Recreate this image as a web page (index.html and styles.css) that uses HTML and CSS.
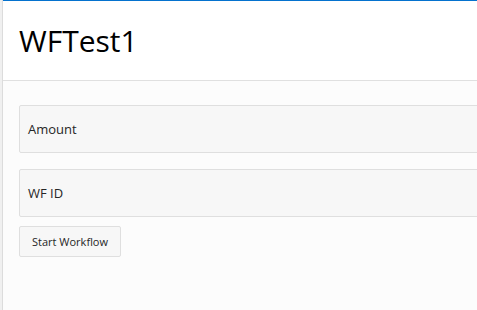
FILE: index.html
```html
<!DOCTYPE html>
<html lang="en">
<head>
<meta charset="utf-8">
<title>WFTest1</title>
<link rel="stylesheet" href="styles.css">
</head>
<body>
<div class="page">
  <div class="rail"></div>
  <div class="main">
    <header class="header">
      <h1 class="title">WFTest1</h1>
    </header>
    <section class="content">
      <div class="field"><span class="label">Amount</span></div>
      <div class="field"><span class="label">WF ID</span></div>
      <button class="btn" type="button">Start Workflow</button>
    </section>
  </div>
</div>
</body>
</html>
```
FILE: styles.css
```css
html, body {
  margin: 0;
  padding: 0;
  height: 100%;
  overflow: hidden;
}
body {
  font-family: "Open Sans", "Noto Sans", sans-serif;
  color: #262626;
  background: #fcfcfc;
}
.page {
  display: flex;
  min-height: 100vh;
}
.rail {
  width: 2px;
  flex: none;
  background: #f0f0f0;
  border-right: 1px solid #dcdcdc;
}
.main {
  flex: 1;
  display: flex;
  flex-direction: column;
  min-width: 0;
  overflow: hidden;
}
.header {
  background: #ffffff;
  border-top: 1px solid #0572ce;
  border-bottom: 1px solid #e0e0e0;
  height: 79px;
  display: flex;
  align-items: center;
  padding-left: 16px;
}
.title {
  margin: 0;
  font-size: 30px;
  font-weight: 500;
  color: #000;
  letter-spacing: 0;
}
.content {
  background: #fcfcfc;
  padding: 24px 0 0 16px;
  display: flex;
  flex-direction: column;
  align-items: flex-start;
  flex: 1;
  overflow: hidden;
}
.field {
  width: calc(100% + 20px);
  height: 46px;
  flex: none;
  background: #f7f7f7;
  border: 1px solid #dfdfdf;
  border-radius: 2px;
  display: flex;
  align-items: center;
  padding-left: 8px;
  margin-bottom: 16px;
}
.field + .field {
  margin-bottom: 9px;
}
.label {
  font-size: 13px;
  color: #262626;
}
.btn {
  font-family: "Open Sans", "Noto Sans", sans-serif;
  font-size: 11px;
  color: #262626;
  background: #f7f7f7;
  border: 1px solid #dfdfdf;
  border-radius: 2px;
  height: 31px;
  padding: 0 12px;
  cursor: pointer;
}
```
